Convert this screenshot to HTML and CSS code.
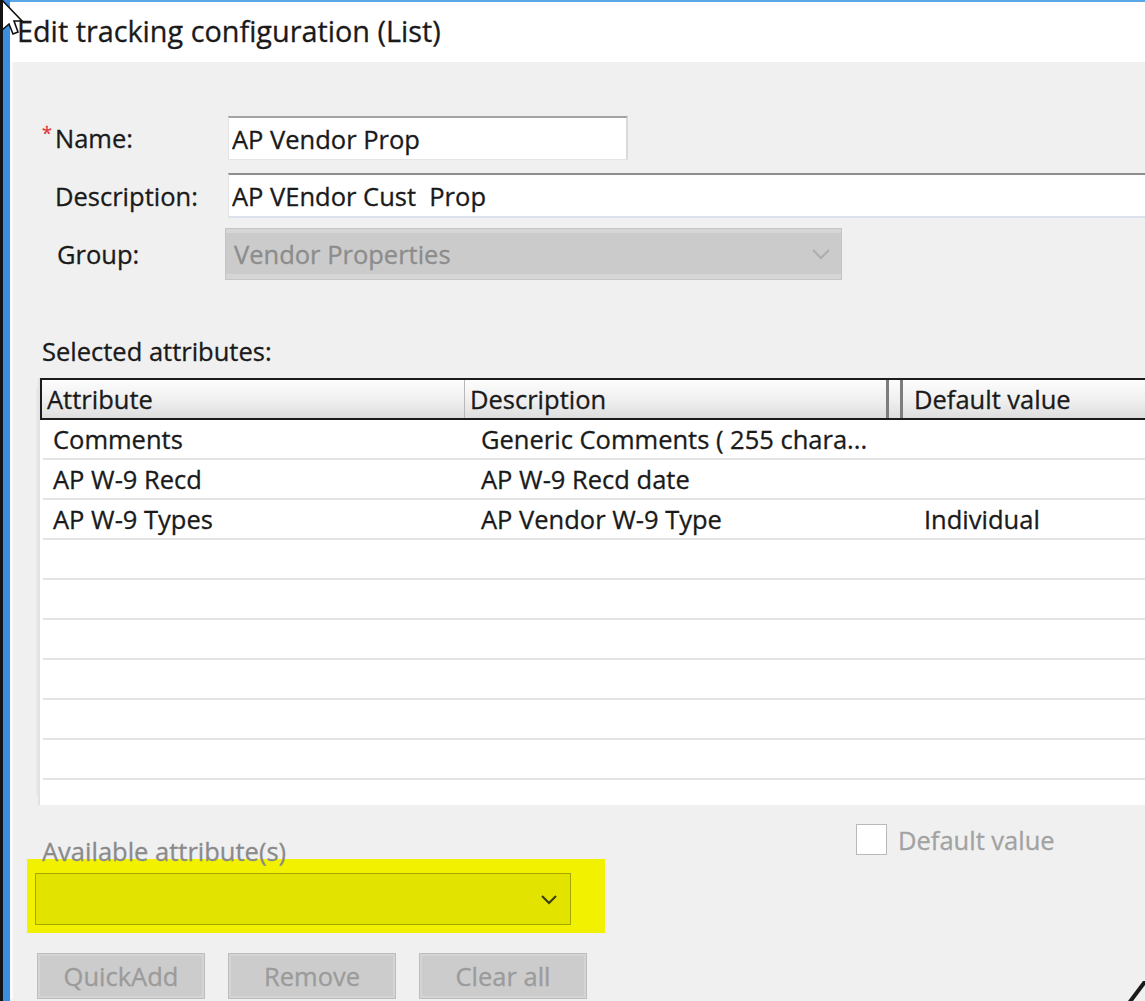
FILE: index.html
```html
<!DOCTYPE html>
<html lang="en">

<head>
    <meta charset="UTF-8" />
    <title>Edit tracking configuration (List)</title>
    <link rel="stylesheet" href="styles.css">
</head>

<body>
    <div class="screen">
        <div class="window">
            <div class="title-bar">Edit tracking configuration (List)</div>

            <div class="dialog">
                <div class="field-row row-name">
                    <label class="field-label" for="name"><span class="required">*</span>Name:</label>
                    <input type="text" id="name" class="text-input name-input" value="AP Vendor Prop" />
                </div>

                <div class="field-row row-desc">
                    <label class="field-label" for="desc">Description:</label>
                    <input type="text" id="desc" class="text-input desc-input" value="AP VEndor Cust  Prop" />
                </div>

                <div class="field-row row-group">
                    <label class="field-label group-label">Group:</label>
                    <div class="combo-disabled">
                        <span>Vendor Properties</span>
                        <svg class="chevron" width="20" height="12" viewBox="0 0 20 12">
                            <path d="M2 2 L10 10 L18 2" fill="none" stroke="#adadad" stroke-width="2" />
                        </svg>
                    </div>
                </div>

                <div class="section-label">Selected attributes:</div>

                <div class="attr-table">
                    <div class="attr-head">
                        <div class="head-cell">Attribute</div>
                        <div class="head-cell head-desc">Description</div>
                        <div class="head-cell head-default">Default value</div>
                    </div>
                    <div class="attr-row">
                        <div class="cell">Comments</div>
                        <div class="cell cell-desc">Generic Comments ( 255 chara...</div>
                        <div class="cell cell-default"></div>
                    </div>
                    <div class="attr-row">
                        <div class="cell">AP W-9 Recd</div>
                        <div class="cell cell-desc">AP W-9 Recd date</div>
                        <div class="cell cell-default"></div>
                    </div>
                    <div class="attr-row">
                        <div class="cell">AP W-9 Types</div>
                        <div class="cell cell-desc">AP Vendor W-9 Type</div>
                        <div class="cell cell-default">Individual</div>
                    </div>
                    <div class="attr-row"></div>
                    <div class="attr-row"></div>
                    <div class="attr-row"></div>
                    <div class="attr-row"></div>
                    <div class="attr-row"></div>
                    <div class="attr-row"></div>
                </div>

                <div class="options-row">
                    <div class="avail-label">Available attribute(s)</div>
                    <div class="default-check">
                        <span class="checkbox"></span>
                        <span>Default value</span>
                    </div>
                </div>

                <div class="highlight">
                    <div class="combo">
                        <svg class="chevron" width="18" height="11" viewBox="0 0 18 11">
                            <path d="M2 2 L9 9 L16 2" fill="none" stroke="#3a3a10" stroke-width="2" />
                        </svg>
                    </div>
                </div>

                <div class="button-row">
                    <button class="btn" disabled>QuickAdd</button>
                    <button class="btn" disabled>Remove</button>
                    <button class="btn" disabled>Clear all</button>
                </div>
            </div>
        </div>

        <!-- mouse pointer over the top-left corner -->
        <svg class="pointer" width="24" height="40" viewBox="0 0 24 40">
            <path d="M-4 -3 L19 21 L11 21 L15 32 L10 34 L6 24 L-2 31 Z" fill="#fff" stroke="#111" stroke-width="1.6" />
        </svg>
        <svg class="corner-mark" width="20" height="20" viewBox="0 0 20 20">
            <line x1="22" y1="-2" x2="4" y2="22" stroke="#1a1a1a" stroke-width="4" />
        </svg>
    </div>
</body>

</html>
```

FILE: styles.css
```css
body {
    margin: 0;
    background: #f0f0f0;
    font-family: "Open Sans", "Noto Sans", sans-serif;
    font-size: 25.5px;
    color: #1a1a1a;
    -webkit-text-stroke: 0.3px currentColor;
    overflow: hidden;
}

.screen {
    position: relative;
    height: 1001px;
    border-left: 3px solid #141414;
    overflow: hidden;
}

.window {
    height: 100%;
    border-left: 7px solid #3b8de0;
    background: #f0f0f0;
}

.title-bar {
    height: 62px;
    box-sizing: border-box;
    border-top: 2px solid #5aa6e6;
    background: #fff;
    padding-left: 7px;
    font-size: 28.8px;
    line-height: 58px;
    white-space: nowrap;
}

.dialog {
    border-left: 3px solid #fafafa;
    padding: 54px 0 0 29px;
}

/* Name / Description / Group */
.field-row {
    display: flex;
    align-items: center;
}

.row-name {
    margin-bottom: 13px;
}

.row-desc {
    margin-bottom: 10px;
}

.field-label {
    width: 186px;
    flex-shrink: 0;
    box-sizing: border-box;
    padding-left: 13px;
    white-space: nowrap;
}

.group-label {
    padding-left: 15px;
}

.required {
    display: inline-block;
    width: 13px;
    margin-left: -13px;
    color: #e2393b;
    font-size: 18px;
    vertical-align: 8px;
}

.text-input {
    box-sizing: border-box;
    font: inherit;
    color: #1a1a1a;
    background: #fff;
    border: 1px solid #e4e4e4;
    border-top: 2px solid #a3a3a3;
    padding: 0 3px;
    outline: none;
}

.name-input {
    width: 400px;
    height: 44px;
    border-right: 2px solid #dadada;
}

.desc-input {
    width: 960px;
    height: 45px;
    flex-shrink: 0;
    border-top-color: #8e8e8e;
    border-bottom: 2px solid #dde1ec;
}

.combo-disabled {
    width: 617px;
    height: 52px;
    margin-left: -3px;
    box-sizing: border-box;
    display: flex;
    align-items: center;
    justify-content: space-between;
    padding: 0 10px 0 8px;
    background: #cbcbcb;
    border: 1px solid #c4c4c4;
    box-shadow: inset 0 4px 0 #d6d6d6, inset 0 -5px 0 #d6d6d6;
    color: #8c8c8c;
}

/* Selected attributes list */
.section-label {
    margin-top: 56px;
    margin-bottom: 12px;
    line-height: 30px;
}

.attr-table {
    width: 1150px;
    height: 427px;
    margin-left: -2px;
    background: #fff;
    box-shadow: -2px 0 0 #e2e2e2, -13px 0 0 -9px #e8e8e8;
}

.attr-head {
    display: grid;
    grid-template-columns: 423px 424px 1fr;
    height: 42px;
    box-sizing: border-box;
    border: 2px solid #1c1c1c;
    border-right: none;
    background: linear-gradient(#fdfdfd, #efefef 55%, #dedede);
}

.head-cell {
    line-height: 38px;
    padding-left: 5px;
    white-space: nowrap;
}

.attr-head .head-cell:first-child {
    border-right: 1px solid #b8b8b8;
}

.head-desc {
    border-right: 3px solid #7d7d7d;
}

.head-default {
    margin-left: 11px;
    border-left: 3px solid #7d7d7d;
    padding-left: 11px;
}

.attr-row {
    display: grid;
    grid-template-columns: 423px 424px 1fr;
    height: 40px;
    box-sizing: border-box;
    margin-left: 3px;
    border-bottom: 2px solid #e4e4e4;
}

.cell {
    line-height: 38px;
    padding-left: 10px;
    white-space: nowrap;
}

.cell-desc {
    padding-left: 15px;
}

.cell-default {
    padding-left: 34px;
}

/* Available attributes + default value */
.options-row {
    display: flex;
    height: 54px;
}

.avail-label {
    width: 814px;
    align-self: flex-end;
    line-height: 30px;
    margin-bottom: -7px;
    color: #8a8a8a;
    position: relative;
    z-index: 1;
}

.default-check {
    display: flex;
    align-items: center;
    gap: 11px;
    height: 31px;
    margin-top: 19px;
    color: #a2a2a2;
}

.checkbox {
    width: 31px;
    height: 31px;
    box-sizing: border-box;
    border: 1px solid #b9b9b9;
    background: #fff;
}

.highlight {
    width: 578px;
    height: 74px;
    box-sizing: border-box;
    margin-left: -15px;
    padding: 14px 0 0 8px;
    background: #f1f100;
}

.combo {
    width: 536px;
    height: 52px;
    box-sizing: border-box;
    display: flex;
    align-items: center;
    justify-content: flex-end;
    padding-right: 12px;
    background: #e3e300;
    border: 1px solid #a6a600;
}

.button-row {
    display: flex;
    gap: 23px;
    margin: 20px 0 0 -5px;
}

.btn {
    width: 168px;
    height: 46px;
    box-sizing: border-box;
    font: inherit;
    color: #9b9b9b;
    background: #cccccc;
    border: 1px solid #bdbdbd;
    box-shadow: inset 0 0 0 2px #d4d4d4;
    padding: 0;
}

/* overlays */
.pointer {
    position: absolute;
    top: 0;
    left: 0;
    overflow: visible;
}

.corner-mark {
    position: absolute;
    right: 0;
    bottom: 0;
}
```
